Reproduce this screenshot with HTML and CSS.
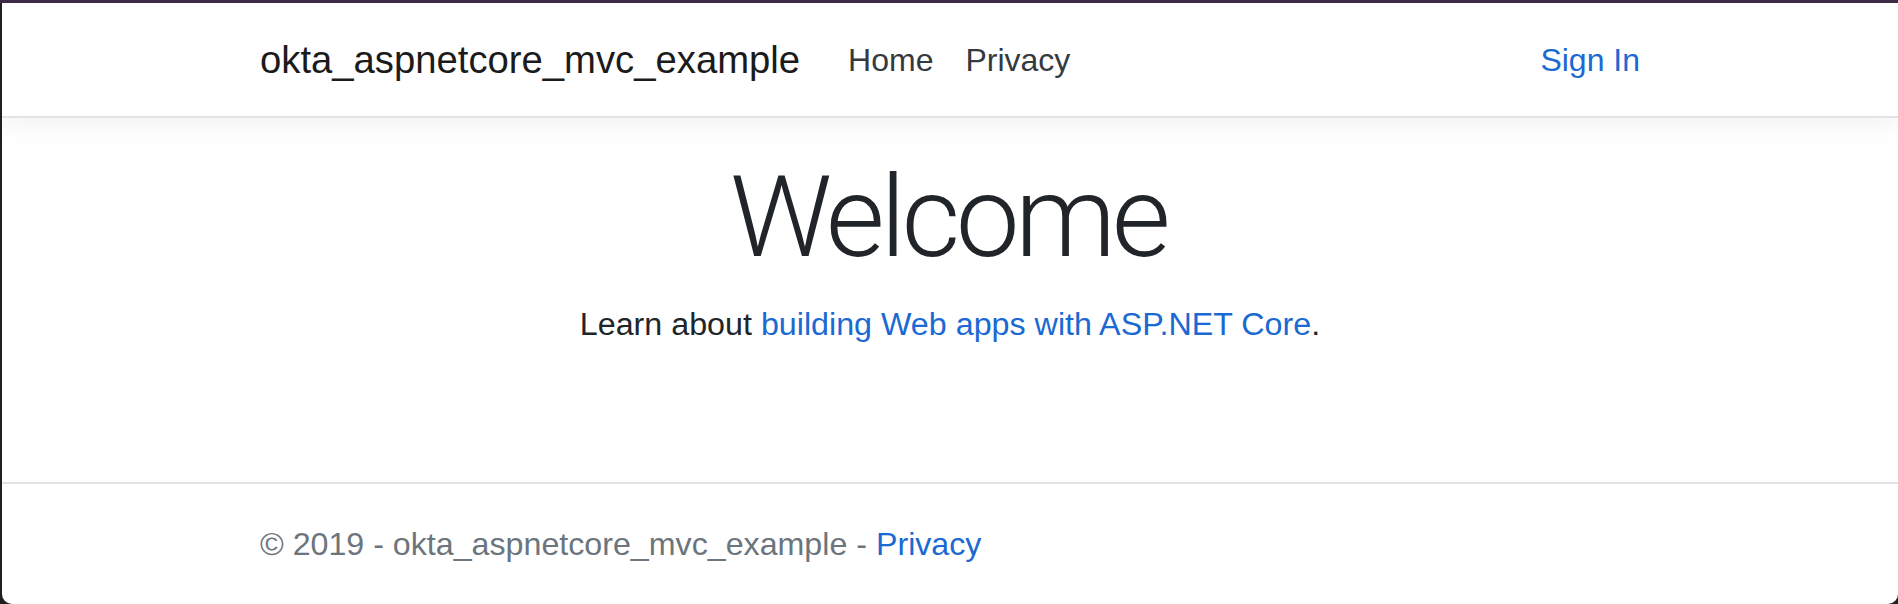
FILE: index.html
```html
<!DOCTYPE html>
<html lang="en">
<head>
<meta charset="utf-8">
<title>Home Page - okta_aspnetcore_mvc_example</title>
<link rel="stylesheet" href="styles.css">
</head>
<body>
<div class="topstrip"></div>
<div class="window">
  <header class="navbar">
    <div class="container nav-inner">
      <a class="brand" href="#">okta_aspnetcore_mvc_example</a>
      <ul class="nav">
        <li><a class="nav-link" href="#">Home</a></li>
        <li><a class="nav-link" href="#">Privacy</a></li>
      </ul>
      <a class="signin" href="#">Sign In</a>
    </div>
  </header>
  <main class="main container">
    <h1 class="display">Welcome</h1>
    <p class="lead-text">Learn about <a class="link" href="#">building Web apps with ASP.NET Core</a>.</p>
  </main>
  <footer class="footer">
    <div class="container footer-inner">&copy; 2019 - okta_aspnetcore_mvc_example - <a class="link" href="#">Privacy</a></div>
  </footer>
</div>
</body>
</html>
```
FILE: styles.css
```css
html {
  background: #1f1f1f;
}
body {
  margin: 0;
  height: 604px;
  overflow: hidden;
  font-family: "Liberation Sans", Arial, sans-serif;
  color: #212529;
}
.topstrip {
  height: 3px;
  background: #3b2b45;
}
.window {
  margin-left: 2px;
  height: 601px;
  background: #fff;
  border-bottom-left-radius: 10px;
  border-bottom-right-radius: 10px;
  display: flex;
  flex-direction: column;
  overflow: hidden;
}
.container {
  width: 1440px;
  box-sizing: border-box;
  padding: 0 30px;
  margin: 0 auto;
}
.navbar {
  background: #fff;
  border-bottom: 2px solid #e1e3e6;
  box-shadow: 0 8px 24px rgba(0, 0, 0, 0.05);
  position: relative;
  z-index: 1;
}
.nav-inner {
  display: flex;
  align-items: center;
  padding-top: 17px;
  padding-bottom: 16px;
}
.brand {
  font-size: 38.25px;
  line-height: 60px;
  padding: 10px 0;
  margin-right: 32px;
  color: #1b1b1b;
  text-decoration: none;
  white-space: nowrap;
}
.nav {
  display: flex;
  list-style: none;
  margin: 0;
  padding: 0;
  flex: 1;
}
.nav-link {
  display: block;
  font-size: 32px;
  line-height: 48px;
  padding: 0 16px;
  color: #343a40;
  text-decoration: none;
}
.signin {
  font-size: 32px;
  line-height: 48px;
  color: #1b69d3;
  text-decoration: none;
}
.main {
  flex: 1;
  padding-top: 32px;
  text-align: center;
}
.display {
  font-family: Roboto, "Liberation Sans", sans-serif;
  font-weight: 300;
  font-size: 114px;
  letter-spacing: -4.5px;
  line-height: 134px;
  margin: 0 0 16px -4px;
  color: #212529;
}
.lead-text {
  font-size: 32.25px;
  line-height: 48px;
  margin: 0;
  color: #212529;
}
.link {
  color: #1b69d3;
  text-decoration: none;
}
.footer {
  border-top: 2px solid #e1e3e6;
  height: 120px;
  line-height: 120px;
}
.footer-inner {
  font-size: 32.2px;
  color: #6c757d;
  white-space: nowrap;
}
```
